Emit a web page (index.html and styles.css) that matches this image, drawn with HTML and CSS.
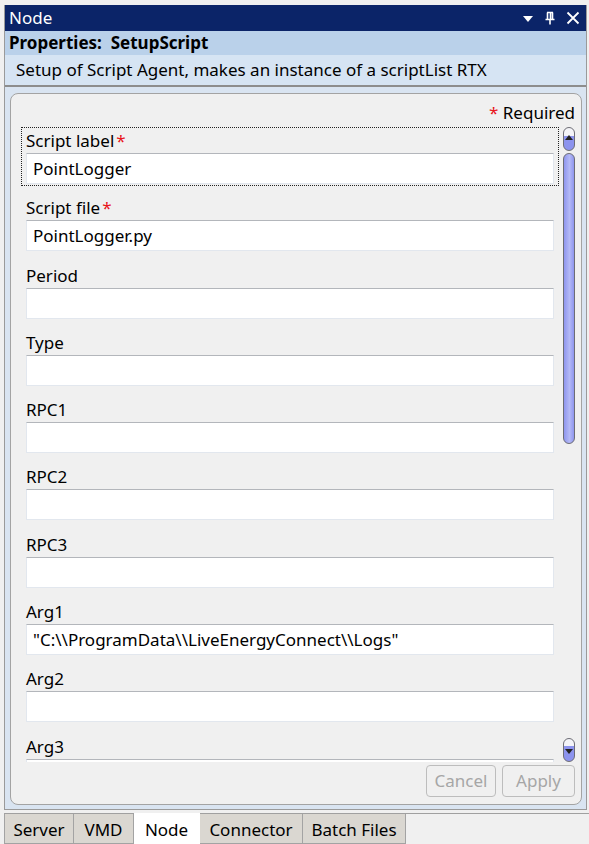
FILE: index.html
```html
<!DOCTYPE html>
<html>
<head>
<meta charset="utf-8">
<link rel="stylesheet" href="styles.css">
</head>
<body>
<div class="window">
  <div class="titlebar">
    <span class="title">Node</span>
    <div class="title-icons">
      <svg width="12" height="10" viewBox="0 0 12 10"><polygon points="1,3 11,3 6,9" fill="#fff"/></svg>
      <svg width="12" height="14" viewBox="0 0 12 14"><path d="M3 1.5h6M3.5 1.5v7M8.5 1.5v7M6.5 1.5v7M1.5 8.5h9M6 8.5v5" stroke="#fff" stroke-width="1.6" fill="none"/></svg>
      <svg width="14" height="14" viewBox="0 0 14 14"><path d="M1.5 1.5l11 11M12.5 1.5l-11 11" stroke="#fff" stroke-width="1.8" fill="none"/></svg>
    </div>
  </div>
  <div class="props-head">Properties:&nbsp; SetupScript</div>
  <div class="props-desc">Setup of Script Agent, makes an instance of a scriptList RTX</div>
  <div class="body-area">
    <div class="panel">
      <div class="required"><span class="star">*</span> Required</div>
      <div class="scroller">
        <div class="fields">
          <div class="field focused">
            <div class="label">Script label<span class="star">*</span></div>
            <div class="input">PointLogger</div>
          </div>
          <div class="field">
            <div class="label">Script file<span class="star">*</span></div>
            <div class="input">PointLogger.py</div>
          </div>
          <div class="field"><div class="label">Period</div><div class="input"></div></div>
          <div class="field"><div class="label">Type</div><div class="input"></div></div>
          <div class="field"><div class="label">RPC1</div><div class="input"></div></div>
          <div class="field"><div class="label">RPC2</div><div class="input"></div></div>
          <div class="field"><div class="label">RPC3</div><div class="input"></div></div>
          <div class="field"><div class="label">Arg1</div><div class="input">"C:\\ProgramData\\LiveEnergyConnect\\Logs"</div></div>
          <div class="field"><div class="label">Arg2</div><div class="input"></div></div>
          <div class="field"><div class="label">Arg3</div><div class="input"></div></div>
        </div>
        <div class="vscroll">
          <div class="sbtn up">
            <svg width="10" height="8" viewBox="0 0 10 8"><polygon points="1,7 9,7 5,2" fill="#222"/></svg>
          </div>
          <div class="thumb"></div>
          <div class="spacer"></div>
          <div class="sbtn down">
            <svg width="10" height="8" viewBox="0 0 10 8"><polygon points="1,1 9,1 5,6" fill="#222"/></svg>
          </div>
        </div>
      </div>
      <div class="buttons">
        <div class="btn cancel">Cancel</div>
        <div class="btn apply">Apply</div>
      </div>
    </div>
  </div>
</div>
<div class="tabs">
  <div class="tab t-server">Server</div>
  <div class="tab t-vmd">VMD</div>
  <div class="tab active t-node">Node</div>
  <div class="tab t-conn">Connector</div>
  <div class="tab t-batch">Batch Files</div>
</div>
</body>
</html>
```

FILE: styles.css
```css
html, body {
  margin: 0;
  padding: 0;
}
body {
  width: 589px;
  height: 844px;
  background: #f0f0f0;
  font-family: "Noto Sans", "Open Sans", sans-serif;
  font-size: 17px;
  color: #000;
  overflow: hidden;
}
.window {
  margin: 5px 2px 0 4px;
  border-left: 1px solid #9a9a9a;
  border-right: 1px solid #9a9a9a;
  border-bottom: 1px solid #9a9a9a;
  background: #d9e4f1;
}
.titlebar {
  height: 26px;
  background: #0b2468;
  color: #fff;
  display: flex;
  align-items: center;
  justify-content: space-between;
  padding: 0 6px 0 4px;
}
.title {
  font-size: 17px;
  line-height: 26px;
}
.title-icons {
  display: flex;
  align-items: center;
  gap: 10px;
}
.props-head {
  height: 24px;
  background: #bad1ea;
  font-weight: bold;
  font-size: 17px;
  line-height: 24px;
  padding-left: 4px;
}
.props-desc {
  height: 30px;
  background: #d6e4f3;
  line-height: 29px;
  padding-left: 11px;
  border-bottom: 2px solid #8d8d8d;
}
.body-area {
  padding: 6px 4px 4px 5px;
}
.panel {
  height: 710px;
  border: 1px solid #a3a3a3;
  border-radius: 8px;
  background: #f0f0f0;
  padding: 0 6px 0 10px;
  display: flex;
  flex-direction: column;
}
.required {
  height: 33px;
  text-align: right;
  line-height: 38px;
}
.star {
  color: #e8141a;
  margin-left: 2px;
}
.required .star {
  margin: 0;
}
.scroller {
  height: 635px;
  display: flex;
  gap: 4px;
  overflow: hidden;
}
.fields {
  flex: 1;
  overflow: hidden;
}
.field {
  height: 59px;
  padding: 0 4px 3px 4px;
  margin-bottom: 8.3px;
  box-sizing: border-box;
  border: 1px dotted transparent;
}
.field.focused {
  border: 1.5px dotted #222;
}
.label {
  height: 25px;
  line-height: 25px;
}
.input {
  height: 31px;
  box-sizing: border-box;
  background: #fff;
  border: 1px solid #e2e7ee;
  border-top-color: #b3b6bb;
  padding-left: 6px;
  line-height: 29px;
}
.vscroll {
  width: 12px;
  display: flex;
  flex-direction: column;
}
.sbtn {
  height: 24px;
  border: 1px solid #6d6d75;
  border-radius: 6px;
  box-sizing: border-box;
  display: flex;
  justify-content: center;
  overflow: hidden;
}
.sbtn svg {
  display: block;
}
.sbtn.up {
  background: linear-gradient(#f4f4f8 0 35%, #8c93ee 35% 100%);
  align-items: flex-start;
  padding-top: 5px;
}
.sbtn.down {
  background: linear-gradient(#f4f4f8 0 30%, #8c93ee 30% 100%);
  align-items: flex-start;
  padding-top: 9px;
}
.thumb {
  margin-top: 2px;
  height: 291px;
  border: 1px solid #6d6d75;
  border-radius: 6px;
  box-sizing: border-box;
  background: linear-gradient(90deg, #8f96ee, #b4b9f6 55%, #8f96ee);
}
.spacer {
  flex: 1;
}
.buttons {
  display: flex;
  justify-content: flex-end;
  gap: 6px;
  padding-top: 3px;
}
.btn {
  height: 32px;
  box-sizing: border-box;
  border: 1px solid #bdbdbd;
  border-radius: 4px;
  color: #a6a6a6;
  line-height: 30px;
  text-align: center;
}
.cancel { width: 70px; }
.apply { width: 73px; }
.tabs {
  margin: 3px 0 0 4px;
  border-top: 1px solid #a0a0a0;
  display: flex;
  height: 31px;
}
.tab {
  height: 30px;
  box-sizing: border-box;
  background: #dad7d1;
  border: 1px solid #a3a3a3;
  border-top: none;
  border-left: none;
  line-height: 31px;
  text-align: center;
}
.t-server { width: 70px; border-left: 1px solid #a3a3a3; }
.t-vmd { width: 60px; }
.t-node { width: 66px; }
.t-conn { width: 103px; }
.t-batch { width: 103px; }
.tab.active {
  background: #fff;
  border-color: #fff;
  margin-top: -1px;
  height: 32px;
  line-height: 34px;
}
```
